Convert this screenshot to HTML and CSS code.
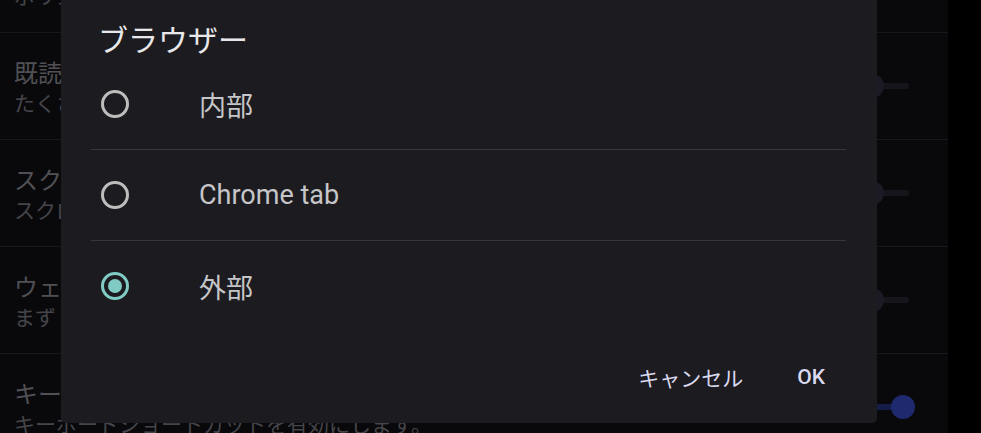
FILE: index.html
```html
<!DOCTYPE html>
<html lang="ja">
<head>
<meta charset="utf-8">
<title>ブラウザー</title>
<link rel="stylesheet" href="styles.css">
</head>
<body>
<div class="screen">
  <div class="settings">
    <div class="row">
      <div class="texts">
        <div class="row-title">ページ送り</div>
        <div class="row-sub">ボリュームキーでページを移動します</div>
      </div>
    </div>
    <div class="row">
      <div class="texts">
        <div class="row-title">既読にする</div>
        <div class="row-sub">たくさん読む</div>
      </div>
      <div class="switch"><span class="thumb"></span></div>
    </div>
    <div class="row">
      <div class="texts">
        <div class="row-title">スクロール</div>
        <div class="row-sub">スクロールします</div>
      </div>
      <div class="switch"><span class="thumb"></span></div>
    </div>
    <div class="row">
      <div class="texts">
        <div class="row-title">ウェブ</div>
        <div class="row-sub">まず ページを開く</div>
      </div>
      <div class="switch"><span class="thumb"></span></div>
    </div>
    <div class="row">
      <div class="texts">
        <div class="row-title">キーボード</div>
        <div class="row-sub">キーボードショートカットを有効にします。</div>
      </div>
      <div class="switch on"><span class="thumb"></span></div>
    </div>
  </div>
  <div class="edge"></div>
</div>

<div class="dialog">
  <div class="dialog-title">ブラウザー</div>
  <div class="options">
    <div class="option">
      <span class="radio"></span>
      <span class="option-label">内部</span>
    </div>
    <div class="option">
      <span class="radio"></span>
      <span class="option-label">Chrome tab</span>
    </div>
    <div class="option">
      <span class="radio checked"></span>
      <span class="option-label">外部</span>
    </div>
  </div>
  <div class="actions">
    <span class="btn">キャンセル</span>
    <span class="btn btn-ok">OK</span>
  </div>
</div>
</body>
</html>
```

FILE: styles.css
```css
html, body {
  margin: 0;
  padding: 0;
  background: #000;
  width: 981px;
  height: 433px;
  overflow: hidden;
  font-family: Roboto, "Noto Sans CJK JP", sans-serif;
}

.screen {
  display: flex;
  height: 433px;
}

.settings {
  width: 948px;
  background: #09090c;
  margin-top: -74px;
  display: flex;
  flex-direction: column;
}

.edge {
  flex: 1;
  background: #000;
}

.row {
  display: flex;
  align-items: center;
  justify-content: space-between;
  height: 106px;
  flex-shrink: 0;
  border-bottom: 1px solid #17171c;
  padding-left: 14px;
  padding-right: 33px;
}

.texts {
  padding-top: 6px;
}

.row-title {
  font-size: 24px;
  line-height: 30px;
  color: #505055;
  white-space: nowrap;
}

.row-sub {
  font-size: 21px;
  line-height: 30px;
  color: #45454a;
  white-space: nowrap;
}

.switch {
  position: relative;
  width: 55px;
  height: 24px;
}

.switch::before {
  content: "";
  position: absolute;
  left: 6px;
  right: 6px;
  top: 9px;
  height: 6px;
  border-radius: 3px;
  background: #15151b;
}

.thumb {
  position: absolute;
  left: 0;
  top: 0;
  width: 24px;
  height: 24px;
  border-radius: 50%;
  background: #1b1b25;
}

.switch.on::before {
  background: #151c48;
}

.switch.on .thumb {
  left: auto;
  right: 0;
  background: #1f2a6e;
}

.dialog {
  position: absolute;
  left: 61px;
  top: -8px;
  width: 816px;
  box-sizing: border-box;
  background: #1c1b20;
  border-radius: 5px;
  padding: 30px 31px 0 30px;
}

.dialog-title {
  font-size: 30px;
  line-height: 37px;
  color: #e8e8ea;
  padding-left: 7px;
}

.options {
  display: flex;
  flex-direction: column;
}

.option {
  display: flex;
  align-items: center;
  height: 90px;
  padding-left: 10px;
}

.option + .option {
  border-top: 1px solid #37363b;
}

.radio {
  width: 28px;
  height: 28px;
  box-sizing: border-box;
  border: 3px solid #bdbdbd;
  border-radius: 50%;
  display: flex;
  align-items: center;
  justify-content: center;
  flex-shrink: 0;
}

.radio.checked {
  border-color: #80cbc4;
}

.radio.checked::after {
  content: "";
  width: 14px;
  height: 14px;
  border-radius: 50%;
  background: #80cbc4;
}

.option-label {
  margin-left: 70px;
  font-size: 27px;
  color: #c6c6c8;
}

.actions {
  display: flex;
  justify-content: flex-end;
  align-items: center;
  height: 92px;
  gap: 30px;
  padding-right: 9px;
}

.btn {
  padding: 0 12px;
  font-size: 21px;
  font-weight: 400;
  color: #d9d9f0;
}

.btn-ok {
  font-weight: 500;
}
```
